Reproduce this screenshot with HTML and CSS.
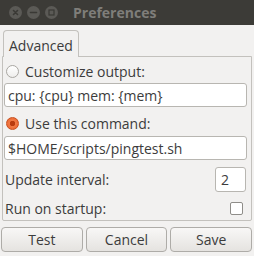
FILE: index.html
```html
<!DOCTYPE html>
<html lang="en">
<head>
  <meta charset="UTF-8" />
  <title>Preferences</title>
  <link rel="stylesheet" href="styles.css">
</head>
<body class="prefs-body">

  <header class="titlebar">
    <span class="win-btn">
      <svg width="13" height="13" viewBox="0 0 13 13" aria-hidden="true">
        <path d="M4.5 4.5l4 4m0-4l-4 4" stroke="#3a3935" stroke-width="1.6" stroke-linecap="round"/>
      </svg>
    </span>
    <span class="win-btn">
      <svg width="13" height="13" viewBox="0 0 13 13" aria-hidden="true">
        <path d="M3.5 6.5h6" stroke="#3a3935" stroke-width="1.6" stroke-linecap="round"/>
      </svg>
    </span>
    <span class="win-btn">
      <svg width="13" height="13" viewBox="0 0 13 13" aria-hidden="true">
        <rect x="4" y="4" width="5" height="5" fill="none" stroke="#3a3935" stroke-width="1.2"/>
      </svg>
    </span>
    <span class="win-title">Preferences</span>
  </header>

  <main class="notebook">
    <div class="tab">Advanced</div>

    <section class="panel">
      <label class="radio-row first">
        <span class="radio"></span>
        Customize output:
      </label>
      <div class="entry">cpu: {cpu} mem: {mem}</div>

      <label class="radio-row second">
        <span class="radio checked"></span>
        Use this command:
      </label>
      <div class="entry entry-cmd">$HOME/scripts/pingtest.sh</div>

      <div class="opt-row interval">
        <span>Update interval:</span>
        <span class="spin">2</span>
      </div>
      <div class="opt-row startup">
        <span>Run on startup:</span>
        <span class="check"></span>
      </div>
    </section>
  </main>

  <!-- Boutons du bas -->
  <footer class="actions">
    <button type="button" class="btn">Test</button>
    <button type="button" class="btn">Cancel</button>
    <button type="button" class="btn">Save</button>
  </footer>

</body>
</html>
```

FILE: styles.css
```css
/* ===== FENETRE ===== */
.prefs-body {
  margin: 0; background: #f2f1f0; color: #3c3c3c;
  font-family: "Open Sans", "DejaVu Sans", sans-serif; font-size: 14px;
  width: 254px; height: 256px; overflow: hidden;
}

.titlebar {
  height: 25px; background: #3c3b37;
  display: flex; align-items: center; gap: 5px; padding-left: 9px;
}
.win-btn {
  width: 13px; height: 13px; border-radius: 50%;
  background: #5b5a56; display: flex;
}
.win-title {
  margin-left: 10px; font-weight: 700; font-size: 14px; color: #7f7e7a;
}

/* ===== ONGLET ===== */
.notebook { padding: 5px 2px 0 2px; }
.tab {
  position: relative; z-index: 1;
  width: 76px; height: 27px; margin-left: 1px; margin-bottom: -1px;
  box-sizing: border-box; padding: 5px 0 0 5px;
  background: #f2f1f0; border: 1px solid #c3c1bd; border-bottom: none;
  border-radius: 4px 4px 0 0;
}
.panel {
  border: 1px solid #c3c1bd; border-radius: 0 0 2px 2px;
  padding: 0 4px 0 1px;
  display: flex; flex-direction: column;
  height: 165px; box-sizing: border-box;
}

.radio-row { height: 24px; display: flex; align-items: center; gap: 6px; padding-left: 2px; }
.radio-row.first { margin-top: 2px; }
.radio-row.second { margin-top: 4px; }
.radio {
  width: 13px; height: 13px; border-radius: 50%; box-sizing: border-box;
  border: 1px solid #a9a7a2; background: linear-gradient(#ffffff, #efeeec);
}
.radio.checked {
  border-color: #c8501f;
  background: radial-gradient(circle, #b93c10 0 2.5px, #f17a45 3px, #e8602b 100%);
}

.entry {
  height: 24px; box-sizing: border-box; padding-left: 3px;
  display: flex; align-items: center;
  background: #fff; border: 1px solid #b8b6b1; border-radius: 3px;
}
.entry-cmd { margin-top: 1px; }

.opt-row { display: flex; align-items: center; justify-content: space-between; padding-left: 1px; }
.opt-row.interval { height: 25px; margin-top: 7px; }
.opt-row.startup { height: 24px; margin-top: 4px; }
.spin {
  width: 31px; height: 25px; box-sizing: border-box; padding-left: 5px;
  display: flex; align-items: center; margin-right: 1px;
  background: #fff; border: 1px solid #b8b6b1; border-radius: 3px;
}
.check {
  width: 13px; height: 13px; box-sizing: border-box; margin-right: 4px;
  background: #fff; border: 1px solid #8f8d89; border-radius: 2px;
}

/* ===== BOUTONS ===== */
.actions {
  display: grid; grid-template-columns: 1fr 1fr 1fr; gap: 3px;
  padding: 6px 2px 0 1px;
}
.btn {
  height: 25px; font: inherit; color: #3c3c3c;
  background: linear-gradient(#f8f7f6, #e5e3e0);
  border: 1px solid #aeaca8; border-radius: 4px; padding: 0;
}
```
